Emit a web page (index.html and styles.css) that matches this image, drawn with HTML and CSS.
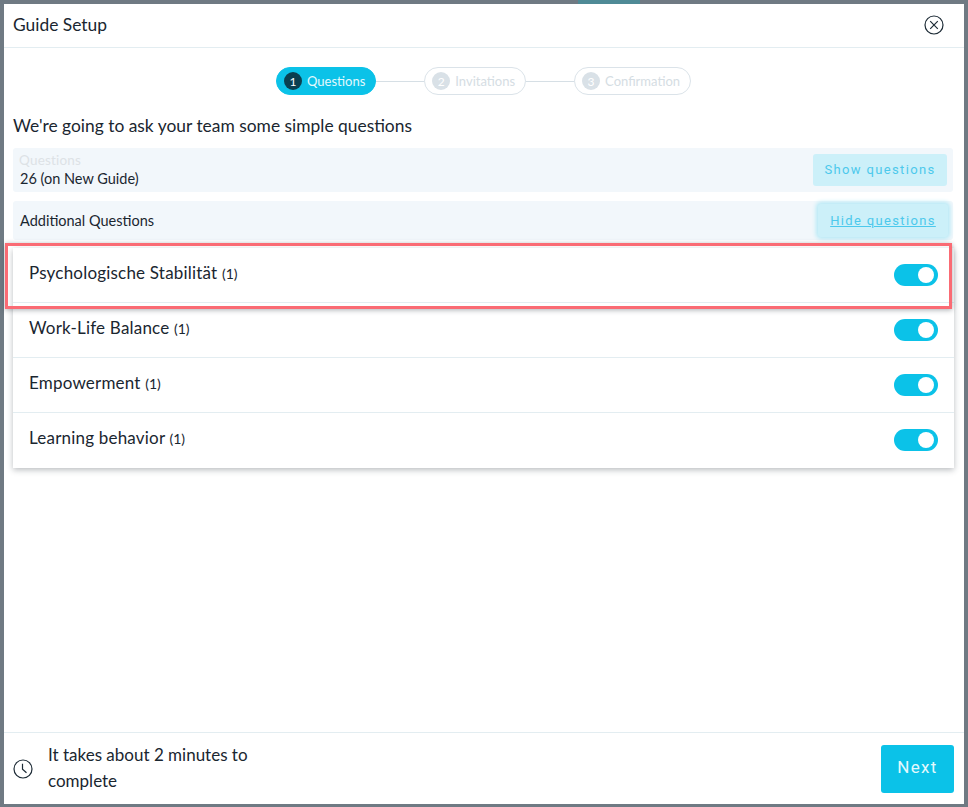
FILE: index.html
```html
<!DOCTYPE html>
<html lang="en">
<head>
<meta charset="utf-8">
<title>Guide Setup</title>
<link rel="stylesheet" href="styles.css">
</head>
<body>
<div class="modal">
  <header class="head">
    <span class="title">Guide Setup</span>
    <svg class="close" width="20" height="20" viewBox="0 0 20 20" fill="none" stroke="#1d2b36" stroke-width="1.2"><circle cx="10" cy="10" r="9"/><path d="M6.2 6.2l7.6 7.6M13.8 6.2l-7.6 7.6"/></svg>
  </header>
  <main class="body">
    <nav class="steps">
      <div class="step active"><span class="num">1</span>Questions</div>
      <span class="line"></span>
      <div class="step"><span class="num">2</span>Invitations</div>
      <span class="line"></span>
      <div class="step"><span class="num">3</span>Confirmation</div>
    </nav>
    <h1 class="lead">We're going to ask your team some simple questions</h1>
    <section class="panel first">
      <div class="info">
        <div class="label">Questions</div>
        <div class="value">26 (on New Guide)</div>
      </div>
      <button class="btn">Show questions</button>
    </section>
    <section class="panel second">
      <div class="value">Additional Questions</div>
      <button class="btn focus">Hide questions</button>
    </section>
    <ul class="list">
      <li class="row"><span>Psychologische Stabilität <span class="cnt">(1)</span></span><span class="toggle"></span><span class="mark"></span></li>
      <li class="row"><span>Work-Life Balance <span class="cnt">(1)</span></span><span class="toggle"></span></li>
      <li class="row"><span>Empowerment <span class="cnt">(1)</span></span><span class="toggle"></span></li>
      <li class="row"><span>Learning behavior <span class="cnt">(1)</span></span><span class="toggle"></span></li>
    </ul>
  </main>
  <footer class="foot">
    <svg class="clock" width="20" height="20" viewBox="0 0 20 20" fill="none" stroke="#1d2b36" stroke-width="1.2"><circle cx="10" cy="10" r="9"/><path d="M9.5 4.8v5.4l4 3.6"/></svg>
    <p class="note">It takes about 2 minutes to complete</p>
    <button class="next">Next</button>
  </footer>
</div>
</body>
</html>
```
FILE: styles.css
```css
* { box-sizing: border-box; }
html, body { height: 100%; }
body {
  margin: 0;
  padding: 4px;
  background: linear-gradient(#4f8a96, #4f8a96) 578px 0 / 62px 4px no-repeat, #6f7a83;
  font-family: Lato, "Open Sans", sans-serif;
  color: #1a2630;
}
.modal {
  height: 800px;
  width: 960px;
  background: #fff;
  display: flex;
  flex-direction: column;
}
.head {
  height: 44px;
  flex: none;
  border-bottom: 1px solid #e3edf1;
  display: flex;
  align-items: center;
  justify-content: space-between;
  padding: 0 20px 2px 9px;
}
.title { font-size: 17.4px; }
.body { flex: 1; padding: 19px 10px 0 9px; }
.steps { display: flex; align-items: center; justify-content: center; height: 28px; }
.step {
  height: 28px;
  border: 1px solid #dbe3e9;
  border-radius: 14px;
  display: flex;
  align-items: center;
  padding: 0 10px 0 7px;
  font-size: 13px;
  color: #d5dde3;
  background: #fff;
}
.step.active { background: #0bc2e8; border-color: #0bc2e8; color: #e4f9fd; }
.num {
  width: 18px;
  height: 18px;
  border-radius: 50%;
  background: #d9e1e7;
  color: #fff;
  font-size: 12px;
  display: flex;
  align-items: center;
  justify-content: center;
  margin-right: 5px;
}
.active .num { background: #0a3f50; }
.line { width: 48px; height: 1px; background: #d6dfe5; }
.lead { margin: 21px 0 0; font-size: 17.4px; font-weight: 400; line-height: 19px; }
.panel {
  background: #f2f7fb;
  border-radius: 3px;
  display: flex;
  align-items: center;
  justify-content: space-between;
  padding: 0 6px 0 7px;
  width: 940px;
}
.first { height: 44px; margin-top: 13px; }
.second { height: 39px; margin-top: 9px; }
.label { font-size: 13.5px; line-height: 15px; margin: 0 0 2px -1px; color: #dde2e6; letter-spacing: .2px; }
.value { font-size: 14.5px; line-height: 18px; }
.btn {
  width: 134px;
  height: 32px;
  background: #ccf0f9;
  color: #4cc9ec;
  border: 0;
  border-radius: 3px;
  font: 13px Roboto, sans-serif;
  letter-spacing: 1.35px;
  padding: 0 0 2px;
}
.focus {
  text-decoration: underline;
  box-shadow: 0 0 4px 2px #b5e9f6;
  height: 33px;
  width: 130px;
  margin-right: -1px;
  padding: 0;
}
.list {
  list-style: none;
  margin: 8px 0 0;
  padding: 0;
  width: 941px;
  box-shadow: 0 2px 6px rgba(40, 50, 60, .32);
  background: #fff;
}
.row {
  position: relative;
  height: 55px;
  display: flex;
  align-items: center;
  justify-content: space-between;
  padding: 0 16px 6px 16px;
  border-bottom: 1px solid #e3edf1;
  font-size: 17px;
  letter-spacing: .2px;
}
.row:last-child { border-bottom: 0; }
.cnt { font-size: 14px; letter-spacing: 0; }
.toggle {
  position: relative;
  width: 44px;
  height: 22px;
  border-radius: 11px;
  background: #0bc2e8;
  margin-top: 5px;
}
.toggle::after {
  content: "";
  position: absolute;
  right: 4px;
  top: 3px;
  width: 16px;
  height: 16px;
  border-radius: 50%;
  background: #fff;
}
.mark {
  position: absolute;
  left: -8px;
  top: -5px;
  width: 947px;
  height: 66px;
  border: 3px solid #fa6b74;
  box-shadow: 0 1px 5px rgba(40, 50, 60, .4);
  pointer-events: none;
}
.foot {
  height: 72px;
  flex: none;
  border-top: 1px solid #e3edf1;
  display: flex;
  align-items: center;
  padding: 0 10px 0 9px;
}
.clock { flex: none; margin-top: 1px; }
.note {
  margin: 0 0 2px 15px;
  width: 215px;
  flex: none;
  font-size: 17px;
  line-height: 26px;
}
.next {
  margin-left: auto;
  width: 73px;
  height: 48px;
  background: #0bc2e8;
  color: #e4f9fd;
  border: 0;
  border-radius: 3px;
  font: 17px Roboto, sans-serif;
  letter-spacing: 1.3px;
  padding: 0 0 4px;
}
```
